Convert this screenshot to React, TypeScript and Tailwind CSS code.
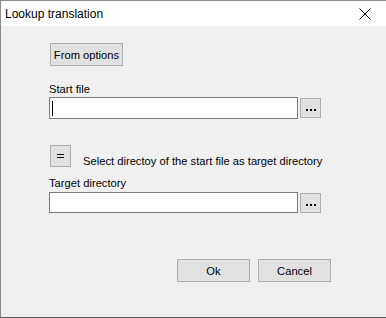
export default function App() {
    const font = { fontFamily: '"Liberation Sans", Arial, sans-serif' };

    return (
        <div
            className="w-[386px] h-[318px] bg-[#f0f0f0] border-t border-l border-b border-t-[#8a8a8a] border-l-[#8a8a8a] border-b-[#555555] text-[11.2px] text-black flex flex-col overflow-hidden"
            style={font}
        >
            <div className="h-[25px] bg-white flex items-center justify-between pl-[4px] pr-[15px] shrink-0">
                <span className="leading-[16px] text-[12px]">Lookup translation</span>
                <svg width="12" height="12" viewBox="0 0 12 12" className="mt-[1px]">
                    <path d="M0.5 0.5 L11.5 11.5 M11.5 0.5 L0.5 11.5" stroke="#000" strokeWidth="1" />
                </svg>
            </div>

            <div className="flex flex-col pl-[48px] pt-[17px]">
                <button className="ml-[1px] w-[73px] h-[23px] bg-[#e1e1e1] border border-[#adadad] leading-[16px] whitespace-nowrap">
                    From options
                </button>

                <span className="mt-[15px] leading-[16px]">Start file</span>
                <div className="flex items-start gap-[2px]">
                    <div className="w-[249px] h-[22px] bg-white border border-[#7a7a7a] flex items-center pl-[2px]">
                        <div className="w-px h-[15px] bg-black" />
                    </div>
                    <DotsButton />
                </div>

                <div className="flex items-end mt-[26px]">
                    <button className="ml-[1px] w-[21px] h-[22px] bg-[#e1e1e1] border border-[#adadad] flex items-center justify-center">
                        <svg width="7" height="4" viewBox="0 0 7 4">
                            <path d="M0 0.5 H7 M0 3.5 H7" stroke="#000" strokeWidth="1" />
                        </svg>
                    </button>
                    <span className="ml-[12px] leading-[16px] mb-[-2px] whitespace-nowrap">
                        Select directoy of the start file as target directory
                    </span>
                </div>

                <span className="mt-[8px] leading-[16px]">Target directory</span>
                <div className="flex items-start mt-[1px] gap-[2px]">
                    <div className="w-[249px] h-[21px] bg-white border border-[#7a7a7a]" />
                    <DotsButton />
                </div>

                <div className="flex gap-[8px] mt-[46px] ml-[128px]">
                    <button className="w-[73px] h-[23px] bg-[#e1e1e1] border border-[#adadad] leading-[16px]">
                        Ok
                    </button>
                    <button className="w-[73px] h-[23px] bg-[#e1e1e1] border border-[#adadad] leading-[16px]">
                        Cancel
                    </button>
                </div>
            </div>
        </div>
    );
}

function DotsButton() {
    return (
        <button className="mt-[1px] w-[21px] h-[20px] bg-[#e1e1e1] border border-[#adadad] flex items-end justify-center pb-[5px]">
            <svg width="10" height="3" viewBox="0 0 10 3">
                <rect x="0" y="0" width="2" height="2" fill="#000" />
                <rect x="4" y="0" width="2" height="2" fill="#000" />
                <rect x="8" y="0" width="2" height="2" fill="#000" />
            </svg>
        </button>
    );
}
